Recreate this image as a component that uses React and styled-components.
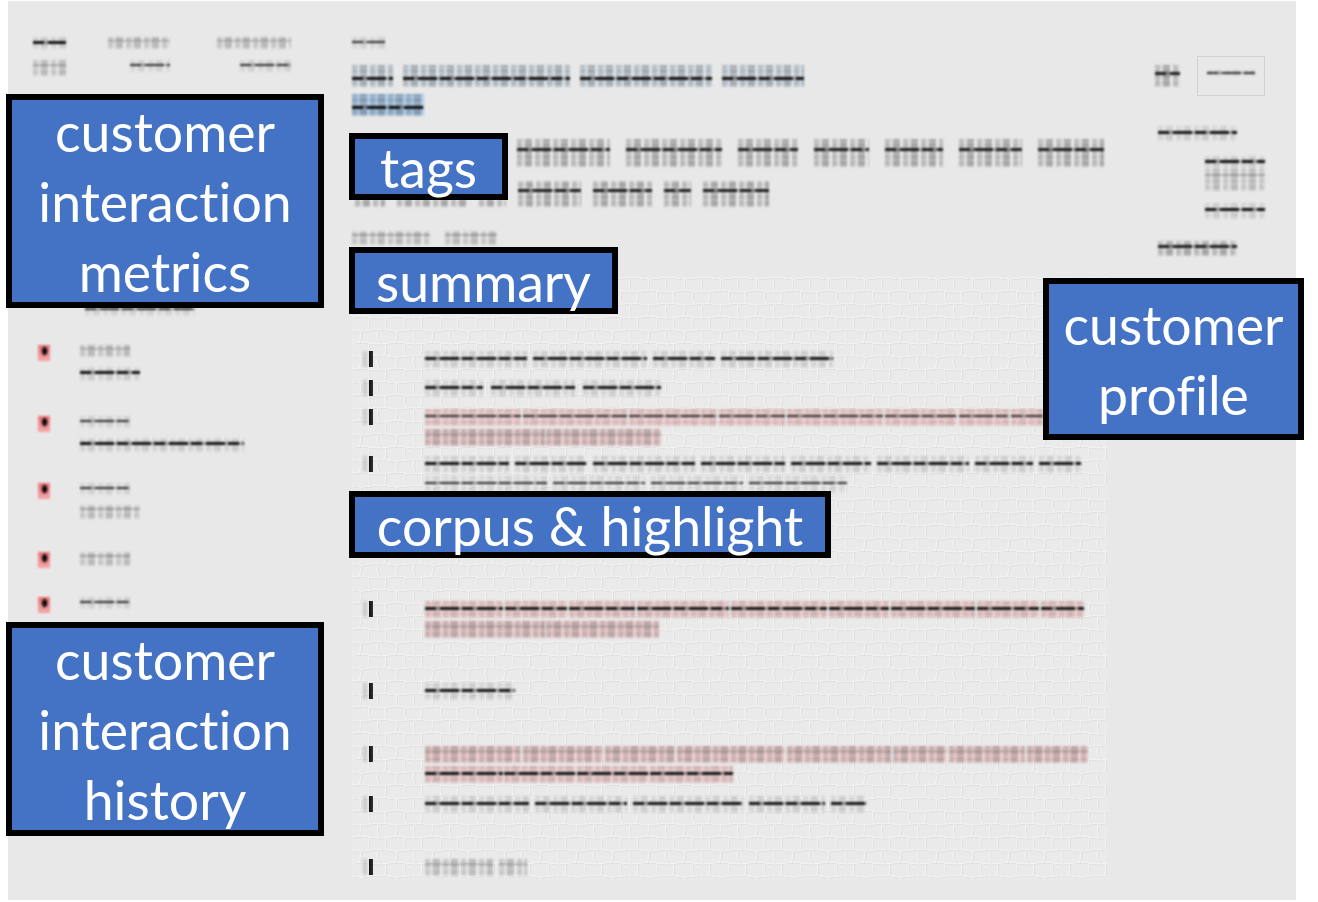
import React from 'react';
import styled, { createGlobalStyle, css } from 'styled-components';

const GlobalStyle = createGlobalStyle`
  html, body { margin: 0; padding: 0; background: #fff; }
  body { font-family: "Lato", "Liberation Sans", sans-serif; }
`;

const cells = (a) => `
  repeating-linear-gradient(0deg, rgba(240, 240, 240, 0.28) 0 2px, transparent 2px 6px),
  repeating-linear-gradient(90deg, rgba(90, 90, 90, ${a}) 0 5px, rgba(90, 90, 90, ${a * 0.25}) 5px 8px, rgba(80, 80, 80, ${a * 1.3}) 8px 15px, rgba(255, 255, 255, 0.08) 15px 18px)
`;

const dash = (c) =>
  `repeating-linear-gradient(90deg, ${c} 0 11px, rgba(60, 60, 60, 0.45) 11px 15px, ${c} 15px 34px, rgba(60, 60, 60, 0.35) 34px 37px)`;

const line = (paint, size, at, fill) => css`
  background-image: ${paint}, ${fill};
  background-size: 100% ${size}px, 100% 100%, 100% 100%;
  background-position: 0 ${at}%, 0 0, 0 0;
  background-repeat: no-repeat;
`;

const tones = {
  heavy: line(dash('#0c0c0c'), 3, 62, cells(0.3)),
  dark: line(dash('#111'), 3, 40, cells(0.15)),
  block: line(dash('#1c1c1c'), 3, 36, cells(0.34)),
  mid: line(dash('#2c2c2c'), 2, 42, cells(0.12)),
  faint: line('linear-gradient(rgba(70, 70, 70, 0.28), rgba(70, 70, 70, 0.28))', 2, 25, cells(0.24)),
};

const tints = {
  pink: 'rgba(238, 150, 150, 0.4)',
  blue: 'rgba(165, 205, 240, 0.28)',
  chip: 'rgba(120, 178, 232, 0.62)',
};

// one smudged word of the blurred capture
const Word = styled.span`
  display: block;
  flex: none;
  width: ${(p) => p.$w}px;
  height: ${(p) => p.$h || 17}px;
  ${(p) => tones[p.$tone || 'mid']};
  background-color: ${(p) => tints[p.$tint] || 'transparent'};
  filter: blur(0.9px);
`;

const Words = styled.div`
  display: flex;
  gap: ${(p) => p.$gap || 6}px;
  margin-top: ${(p) => p.$top || 0}px;
  margin-left: ${(p) => p.$left || 0}px;
`;

const Line = ({ widths, tone, tint, h, gap, top, left }) => (
  <Words $gap={gap} $top={top} $left={left}>
    {widths.map((w, i) => (
      <Word key={i} $w={w} $h={h} $tone={tone} $tint={tint} />
    ))}
  </Words>
);

const Screen = styled.div`
  box-sizing: border-box;
  position: relative;
  width: 1288px;
  height: 899px;
  margin: 1px 0 0 8px;
  padding: 36px 0 0 25px;
  background: #e8e8e8;
  display: grid;
  grid-template-columns: 319px 803px 1fr;
`;

const LeftColumn = styled.aside`
  display: flex;
  flex-direction: column;
`;

const Metrics = styled.div`
  display: grid;
  grid-template-columns: 75px 109px 74px;
`;

const Metric = styled.div`
  display: flex;
  flex-direction: column;
`;

const History = styled.div`
  display: flex;
  flex-direction: column;
  margin-top: 29px;
`;

const HistoryItem = styled.div`
  display: grid;
  grid-template-columns: 47px 1fr;
  margin-top: ${(p) => p.$top || 0}px;
`;

const Dot = styled.span`
  display: block;
  width: 12px;
  height: 16px;
  margin-left: 5px;
  background:
    radial-gradient(ellipse at 55% 38%, #0c0c0c 0 2px, transparent 3.5px),
    linear-gradient(#ef7478, #f4a6a8);
  filter: blur(0.8px);
`;

const Center = styled.main`
  display: flex;
  flex-direction: column;
`;

const Panel = styled.section`
  position: relative;
  box-sizing: border-box;
  width: 755px;
  height: 602px;
  margin-top: 32px;
  padding: 74px 0 0 14px;
`;

const Texture = styled.svg`
  position: absolute;
  inset: 0;
  width: 100%;
  height: 100%;
  filter: blur(0.5px);
`;

const CorpusRow = styled.div`
  position: relative;
  display: grid;
  grid-template-columns: 59px 1fr;
  margin-top: ${(p) => p.$top || 0}px;
`;

const Marker = styled.span`
  display: block;
  width: 4px;
  height: 16px;
  margin-left: 3px;
  background: linear-gradient(90deg, #111, #333);
  box-shadow: -6px 0 3px rgba(120, 120, 120, 0.28);
  filter: blur(0.7px);
`;

const Para = styled.div`
  display: flex;
  flex-direction: column;
  gap: 3px;
`;

const RightColumn = styled.aside`
  display: flex;
  flex-direction: column;
  margin-top: 19px;
  width: 110px;
`;

const ProfileHead = styled.div`
  display: flex;
  justify-content: space-between;
  align-items: center;
`;

const ProfileBox = styled.div`
  box-sizing: border-box;
  display: flex;
  align-items: center;
  justify-content: center;
  width: 68px;
  height: 40px;
  padding-bottom: 6px;
  border: 1px solid #d2d2d2;
`;

const Callout = styled.div`
  position: absolute;
  box-sizing: border-box;
  left: ${(p) => p.$x - 8}px;
  top: ${(p) => p.$y - 1}px;
  width: ${(p) => p.$w}px;
  height: ${(p) => p.$h}px;
  display: flex;
  flex-direction: column;
  align-items: center;
  justify-content: center;
  background: #4472c4;
  border: 6px solid #000;
  color: #fff;
  font-size: 53.6px;
  line-height: 70px;
  font-variant-ligatures: none;
  white-space: nowrap;
`;

const brick =
  'M0 1 Q9 3 18 1 T36 1 M0 14 Q9 12 18 14 T36 14 M8 1 Q10 8 7 14 M26 1 Q24 8 27 14 M17 14 Q15 21 18 27 M33 14 Q35 21 32 27';

const corpus = [
  { top: 0, tone: 'dark', lines: [[102, 114, 62, 112]] },
  { top: 12, tone: 'dark', lines: [[58, 84, 78]], gap: 8 },
  { top: 12, tint: 'pink', tone: 'mid', tailTone: 'faint', lines: [[96, 104, 88, 66, 96, 72, 50, 32]], tail: [[120, 115]] },
  { top: 10, tone: 'dark', tailTone: 'mid', tailGap: 6, lines: [[84, 72, 102, 84, 80, 92, 58, 42]], tail: [[122, 92, 92, 98]] },
  { top: 108, tint: 'pink', tone: 'dark', tailTone: 'faint', lines: [[78, 62, 66, 92, 96, 60, 84, 62, 43]], tail: [[120, 113]] },
  { top: 45, tone: 'dark', lines: [[90]] },
  { top: 46, tint: 'pink', tone: 'faint', tailTone: 'dark', lines: [[96, 80, 70, 108, 104, 54, 76, 61]], tail: [[78, 72, 72, 83]] },
  { top: 13, tone: 'dark', lines: [[104, 92, 110, 76, 36]] },
  { top: 46, tone: 'faint', lines: [[68, 28]] },
];

export default function App() {
  return (
    <>
      <GlobalStyle />
      <Screen>
        <LeftColumn>
          <Metrics>
            <Metric>
              <Line widths={[33]} h={12} tone="dark" />
              <Line widths={[33]} h={16} top={11} tone="faint" />
            </Metric>
            <Metric>
              <Line widths={[62]} h={12} tone="faint" />
              <Line widths={[40]} h={12} top={11} left={22} tone="mid" />
            </Metric>
            <Metric>
              <Line widths={[74]} h={12} tone="faint" />
              <Line widths={[51]} h={12} top={11} left={23} tone="mid" />
            </Metric>
          </Metrics>
          <Line widths={[110]} h={13} top={227} left={52} tone="mid" />
          <History>
            <HistoryItem>
              <Dot />
              <div>
                <Line widths={[50]} h={12} tone="faint" />
                <Line widths={[60]} h={14} top={10} tone="dark" />
              </div>
            </HistoryItem>
            <HistoryItem $top={35}>
              <Dot />
              <div>
                <Line widths={[50]} h={12} tone="mid" />
                <Line widths={[164]} h={14} top={10} tone="dark" />
              </div>
            </HistoryItem>
            <HistoryItem $top={31}>
              <Dot />
              <div>
                <Line widths={[50]} h={12} tone="mid" />
                <Line widths={[60]} h={14} top={10} tone="faint" />
              </div>
            </HistoryItem>
            <HistoryItem $top={33}>
              <Dot />
              <Line widths={[50]} h={14} tone="faint" />
            </HistoryItem>
            <HistoryItem $top={29}>
              <Dot />
              <Line widths={[50]} h={12} tone="mid" />
            </HistoryItem>
          </History>
        </LeftColumn>

        <Center>
          <Line widths={[33]} h={12} tone="mid" />
          <Line widths={[41, 167, 132, 82]} h={22} gap={10} top={16} tone="heavy" tint="blue" />
          <Line widths={[72]} h={22} top={7} tone="heavy" tint="chip" />
          <Line widths={[93, 96, 60, 55, 58, 63, 66]} h={28} gap={16} top={23} left={165} tone="block" />
          <Line widths={[30, 70, 27, 63, 59, 27, 66]} h={26} gap={12} top={14} left={3} tone="block" />
          <Line widths={[78, 52]} h={14} gap={15} top={24} tone="faint" />
          <Panel>
            <Texture aria-hidden="true">
              <defs>
                <pattern id="cobble" width="36" height="26" patternUnits="userSpaceOnUse">
                  <path d={brick} fill="none" stroke="#dedede" strokeWidth="1" transform="translate(1 1)" />
                  <path d={brick} fill="none" stroke="#f3f3f3" strokeWidth="1" />
                </pattern>
              </defs>
              <rect width="100%" height="100%" fill="#eaeaea" />
              <rect width="100%" height="100%" fill="url(#cobble)" />
            </Texture>
            {corpus.map((row, i) => (
              <CorpusRow key={i} $top={row.top}>
                <Marker />
                <Para>
                  {row.lines.map((w, j) => (
                    <Line key={j} widths={w} tone={row.tone} tint={row.tint} gap={row.tint ? 2 : row.gap || 6} />
                  ))}
                  {row.tail &&
                    row.tail.map((w, j) => (
                      <Line key={j} widths={w} tone={row.tailTone} tint={row.tint} gap={row.tailGap || 1} />
                    ))}
                </Para>
              </CorpusRow>
            ))}
          </Panel>
        </Center>

        <RightColumn>
          <ProfileHead>
            <Word $w={25} $h={22} $tone="block" />
            <ProfileBox>
              <Word $w={48} $h={6} $tone="mid" />
            </ProfileBox>
          </ProfileHead>
          <Line widths={[79]} h={15} top={30} left={3} tone="dark" />
          <Line widths={[60]} h={13} top={15} left={50} tone="dark" />
          <Line widths={[60]} h={22} left={50} tone="faint" />
          <Line widths={[60]} h={16} top={12} left={50} tone="dark" />
          <Line widths={[79]} h={15} top={22} left={3} tone="block" />
        </RightColumn>

        <Callout $x={6} $y={94} $w={318} $h={214}>
          <span>customer</span>
          <span>interaction</span>
          <span>metrics</span>
        </Callout>
        <Callout $x={349} $y={133} $w={159} $h={67}>
          tags
        </Callout>
        <Callout $x={349} $y={247} $w={269} $h={67}>
          summary
        </Callout>
        <Callout $x={349} $y={491} $w={482} $h={67}>
          corpus &amp; highlight
        </Callout>
        <Callout $x={1043} $y={278} $w={261} $h={162}>
          <span>customer</span>
          <span>profile</span>
        </Callout>
        <Callout $x={6} $y={622} $w={318} $h={214}>
          <span>customer</span>
          <span>interaction</span>
          <span>history</span>
        </Callout>
      </Screen>
    </>
  );
}
